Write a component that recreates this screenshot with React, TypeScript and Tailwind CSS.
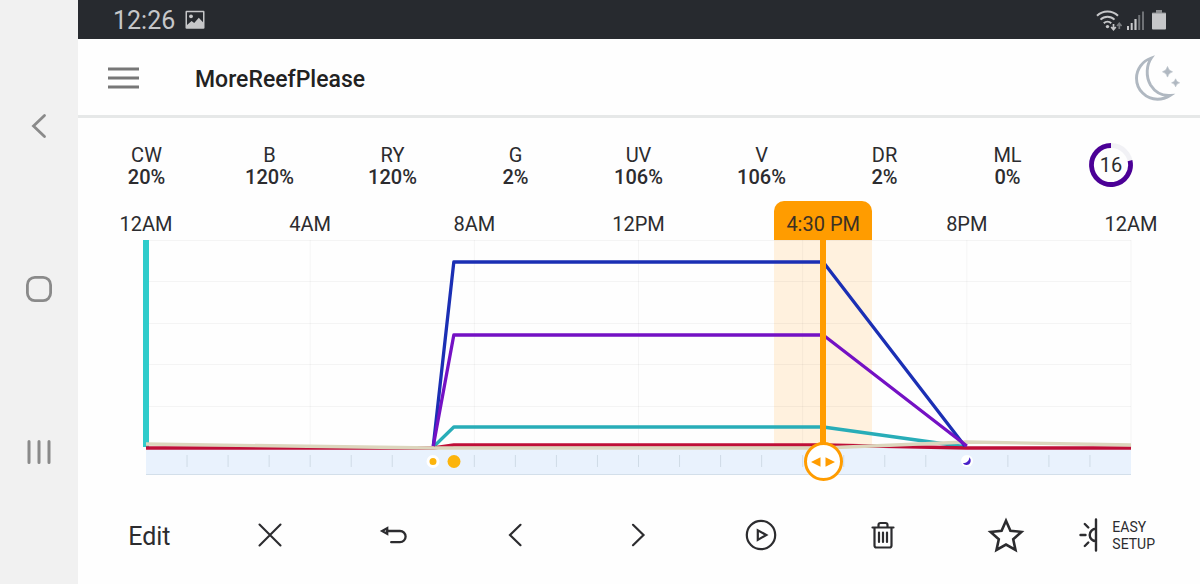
import { useState } from 'react'

interface Channel {
  name: string
  value: string
}

const channels: Channel[] = [
  { name: 'CW', value: '20%' },
  { name: 'B', value: '120%' },
  { name: 'RY', value: '120%' },
  { name: 'G', value: '2%' },
  { name: 'UV', value: '106%' },
  { name: 'V', value: '106%' },
  { name: 'DR', value: '2%' },
  { name: 'ML', value: '0%' },
]

const axisHours = [0, 4, 8, 12, 16, 20, 24]

// one unit of x is a minute, one unit of y is a pixel
const PLOT_HEIGHT = 208

const series = [
  { color: '#28adb8', points: '420,207 450,187 990,187 1200,207' },
  { color: '#bf0f38', points: '0,208 420,208 450,205 990,205 1200,208 1440,208' },
  { color: '#dcd6bd', points: '0,204 420,208 990,208 1200,202 1440,205' },
  { color: '#1b2fb4', points: '420,206 450,22 990,22 1197,206' },
  { color: '#7411c4', points: '420,206 450,95 990,95 1200,206' },
]

function hourLabel(hour: number) {
  return `${hour % 12 || 12}${hour % 24 < 12 ? 'AM' : 'PM'}`
}

function timeLabel(minutes: number) {
  const h = Math.floor(minutes / 60)
  const m = String(minutes % 60).padStart(2, '0')
  return `${h % 12 || 12}:${m} ${h % 24 < 12 ? 'AM' : 'PM'}`
}

function percent(minutes: number) {
  return `${(minutes / 1440) * 100}%`
}

function SystemNav() {
  return (
    <nav
      aria-label="System"
      className="flex w-[78px] shrink-0 flex-col items-center justify-between bg-[#f1f1f1] pt-28 pr-px pb-[118px] text-[#8a8a8a]"
    >
      <button type="button" aria-label="Back">
        <svg width="28" height="28" viewBox="0 0 28 28" fill="none" stroke="currentColor" strokeWidth="2.8" strokeLinecap="round">
          <path d="M19.5 3.5 8.5 14l11 10.5" />
        </svg>
      </button>
      <button type="button" aria-label="Home">
        <svg width="28" height="28" viewBox="0 0 28 28" fill="none" stroke="currentColor" strokeWidth="2.8">
          <rect x="2.4" y="2.4" width="23.2" height="23.2" rx="7.5" />
        </svg>
      </button>
      <button type="button" aria-label="Recent apps">
        <svg width="28" height="28" viewBox="0 0 28 28" fill="none" stroke="currentColor" strokeWidth="3" strokeLinecap="round">
          <path d="M4 3.5v21M14 3.5v21M24 3.5v21" />
        </svg>
      </button>
    </nav>
  )
}

function StatusBar() {
  return (
    <div className="flex h-[39px] items-center justify-between bg-[#272a2f] pr-[34px] pl-[35px] text-[#c6c7c9]">
      <div className="flex items-center gap-2.5">
        <span className="pt-0.5 text-[25px] leading-8">12:26</span>
        <svg width="20" height="20" viewBox="0 0 20 20" fill="currentColor">
          <path
            fillRule="evenodd"
            d="M1.5.8h17a1 1 0 0 1 1 1v16a1 1 0 0 1-1 1h-17a1 1 0 0 1-1-1v-16a1 1 0 0 1 1-1ZM2 2.3v12.8l4.6-4.2 2.6 2.1 4.6-5.2 4.2 4.4V2.3Z"
          />
          <circle cx="6" cy="6.3" r="1.9" />
        </svg>
      </div>
      <div className="flex items-center gap-1">
        <svg width="26" height="22" viewBox="0 0 26 22" fill="none" stroke="currentColor" strokeWidth="2">
          <path d="M1 6.8a15 15 0 0 1 21 0M4.5 10.6a10 10 0 0 1 14 0M7.8 14.2a5.4 5.4 0 0 1 7.4 0" />
          <circle cx="11.5" cy="17.6" r="1.7" fill="currentColor" stroke="none" />
          <path d="M17.5 15v5.5M15.2 18l2.3 2.6 2.3-2.6" strokeWidth="1.7" />
          <path d="M23.3 20v-5M21 17l2.3-2.6 2.3 2.6" strokeWidth="1.7" stroke="#777a7e" />
        </svg>
        <svg width="18" height="20" viewBox="0 0 18 20" fill="currentColor">
          <path d="M1 16h2v4H1zM4.7 13h2v7h-2zM8.4 9h2.2v11H8.4z" />
          <path d="M12.2 5h2v15h-2zM16 1.5h2V20h-2z" fill="#6f7276" />
        </svg>
        <svg className="ml-1" width="14" height="20" viewBox="0 0 14 20">
          <path d="M4 0h6v2.5h3.2a.8.8 0 0 1 .8.8V4H0v-.7a.8.8 0 0 1 .8-.8H4z" fill="#8d8f92" />
          <path d="M0 3.6h14v15a.9.9 0 0 1-.9.9H.9a.9.9 0 0 1-.9-.9z" fill="currentColor" />
        </svg>
      </div>
    </div>
  )
}

function Header() {
  return (
    <header className="flex h-[79px] items-center border-b-3 border-[#e6e8e8] pt-0.5 pr-5 pl-[30px]">
      <button type="button" aria-label="Menu">
        <svg width="31" height="22" viewBox="0 0 31 22" stroke="#777" strokeWidth="3">
          <path d="M0 2h31M0 11h31M0 20h31" />
        </svg>
      </button>
      <h1 className="ml-14 pt-1 text-[23px] leading-8 font-medium text-[#222]">MoreReefPlease</h1>
      <button type="button" aria-label="Moonlight" className="ml-auto">
        <svg width="46" height="48" viewBox="0 0 46 48" fill="none" stroke="#b0b8c1" strokeWidth="2.9">
          <path d="M17.3 4C8.5 7 2.500 15 2.500 24.200A21 21 0 0 0 23.500 45.200C28.500 45.200 32.500 43.800 36 41.500C28 42 21 38 16.500 31C11.500 22 12.500 11 17.300 4Z" />
          <path
            d="M33.500 12.500q1 4.300 5 5.300-4 1-5 5.300-1-4.300-5-5.300 4-1 5-5.300ZM41.600 24.800q.8 3.400 4 4-3.200.7-4 4-.8-3.300-4-4 3.200-.6 4-4Z"
            fill="#b0b8c1"
            stroke="#b0b8c1"
            strokeWidth="0.6"
          />
        </svg>
      </button>
    </header>
  )
}

function ChannelRow() {
  return (
    <div className="grid grid-cols-9 items-center pr-2 pl-[7px] text-center text-[20px] leading-[22px]">
      {channels.map((c) => (
        <div key={c.name} className="pt-0.5">
          <div>{c.name}</div>
          <div className="font-medium">{c.value}</div>
        </div>
      ))}
      <button type="button" aria-label="16 points" className="relative ml-5 size-11">
        <svg className="absolute inset-0" width="44" height="44" viewBox="0 0 44 44" fill="none" strokeWidth="4.8">
          <circle cx="22" cy="22" r="19.5" stroke="#f1f1f5" />
          <path d="M41 17.6A19.5 19.5 0 1 1 22 2.5" stroke="#4b0096" />
        </svg>
        <span className="relative">16</span>
      </button>
    </div>
  )
}

function Schedule() {
  const [time, setTime] = useState(990)

  return (
    <section aria-label="Schedule" className="relative mt-[13px] mr-[69px] ml-17">
      <div className="flex h-[39px] items-center justify-between pt-1.5 text-[20px] leading-6">
        {axisHours.map((hour) => (
          <div key={hour} className="flex w-0 justify-center whitespace-nowrap">
            {Math.abs(hour * 60 - time) > 60 && hourLabel(hour)}
          </div>
        ))}
      </div>

      <div className="relative z-10">
        <div
          className="absolute top-0 h-52 w-[98px] -translate-x-1/2 bg-[#fff1de]"
          style={{ left: percent(time) }}
        />
        <svg
          className="relative block h-52 w-full overflow-visible"
          viewBox={`0 0 1440 ${PLOT_HEIGHT}`}
          preserveAspectRatio="none"
          fill="none"
        >
          <g stroke="#000" strokeOpacity="0.04">
            {[0.5, 41.5, 83.5, 124.5, 166.5].map((y) => (
              <line key={y} x1="0" x2="1440" y1={y} y2={y} vectorEffect="non-scaling-stroke" />
            ))}
            {axisHours.map((h) => (
              <line key={h} x1={h * 60} x2={h * 60} y1="0" y2={PLOT_HEIGHT} vectorEffect="non-scaling-stroke" />
            ))}
          </g>
          <line x1="0" x2="0" y1="0" y2="207" stroke="#2fcccb" strokeWidth="6" vectorEffect="non-scaling-stroke" />
          {series.map((s) => (
            <polyline
              key={s.color}
              points={s.points}
              stroke={s.color}
              strokeWidth="3.3"
              strokeLinejoin="round"
              vectorEffect="non-scaling-stroke"
            />
          ))}
        </svg>
      </div>

      <div className="relative h-[27px] border-b border-[#d3dfea] bg-[#e9f2fd]">
        <svg className="block h-[26px] w-full" viewBox="0 0 24 26" preserveAspectRatio="none" stroke="#cfdbe6">
          {Array.from({ length: 23 }, (_, i) => (
            <line key={i} x1={i + 1} x2={i + 1} y1="7" y2="19" vectorEffect="non-scaling-stroke" />
          ))}
        </svg>
        <span
          className="absolute top-[7px] size-[13px] -translate-x-1/2 rounded-full border-3 border-white bg-[#fcb40c]"
          style={{ left: percent(420) }}
        />
        <span
          className="absolute top-[7px] size-[13px] -translate-x-1/2 rounded-full bg-[#fcb40c]"
          style={{ left: percent(450) }}
        />
        <span
          className="absolute top-[7px] size-3 -translate-x-1/2 rounded-full bg-white"
          style={{ left: percent(1200) }}
        >
          <svg width="12" height="12" viewBox="0 0 12 12">
            <path d="M8.400 2.200C10.900 5 9.800 9.800 5.600 10C4 10.100 2.600 9.300 2 8C5.200 8.200 8.200 6 8.400 2.200Z" fill="#4820c8" />
          </svg>
        </span>
      </div>

      {/* time marker: tab, stem and drag handle */}
      <div
        className="pointer-events-none absolute top-0 z-20 flex w-[98px] -translate-x-1/2 flex-col items-center"
        style={{ left: percent(time) }}
      >
        <output
          htmlFor="time"
          className="h-[39px] w-full rounded-t-[10px] bg-[#ff9c00] pt-[11px] text-center text-[20px] leading-6 text-[#3b3024]"
        >
          {timeLabel(time)}
        </output>
        <span className="h-51 w-1.5 bg-[#ff9c00]" />
        <span className="-mt-0.5 flex size-[39px] items-center justify-center rounded-full border-[3px] border-[#ff9c00] bg-white">
          <svg width="24" height="10" viewBox="0 0 24 10" fill="#ff9c00">
            <path d="M0 5 9.5.3v9.4zM24 5 14.5.3v9.4z" />
          </svg>
        </span>
      </div>
      <input
        id="time"
        type="range"
        aria-label="Time of day"
        min={0}
        max={1440}
        step={15}
        value={time}
        onChange={(e) => setTime(Number(e.target.value))}
        className="absolute inset-x-0 bottom-0 z-30 h-7 w-full cursor-pointer opacity-0"
      />
    </section>
  )
}

function Toolbar() {
  return (
    <div
      role="toolbar"
      aria-label="Schedule actions"
      className="mt-9 mb-6 grid h-12 grid-cols-9 items-stretch pr-2.5 pl-2 [&>button]:flex [&>button]:items-center [&>button]:justify-center"
    >
      <button type="button" className="pt-1 pl-1 text-[25px] leading-8">
        Edit
      </button>
      <button type="button" aria-label="Clear">
        <svg width="26" height="26" viewBox="0 0 26 26" fill="none" stroke="currentColor" strokeWidth="2.1" strokeLinecap="round">
          <path d="M2.500 2.500l21 21M23.500 2.500l-21 21" />
        </svg>
      </button>
      <button type="button" aria-label="Undo">
        <svg width="28" height="20" viewBox="0 0 28 20" fill="none" stroke="currentColor" strokeWidth="2.3" strokeLinecap="round">
          <path d="M8.200 3.200v5.600L3.200 6ZM9.500 6H21a5.500 5.500 0 0 1 0 11.200H12.200" />
        </svg>
      </button>
      <button type="button" aria-label="Previous point">
        <svg width="26" height="26" viewBox="0 0 26 26" fill="none" stroke="currentColor" strokeWidth="2.2" strokeLinecap="round">
          <path d="M18.500 2.800 8 13l10.500 10.200" />
        </svg>
      </button>
      <button type="button" aria-label="Next point">
        <svg width="26" height="26" viewBox="0 0 26 26" fill="none" stroke="currentColor" strokeWidth="2.2" strokeLinecap="round">
          <path d="M8 2.800 18.500 13 8 23.200" />
        </svg>
      </button>
      <button type="button" aria-label="Preview">
        <svg width="32" height="32" viewBox="0 0 32 32" fill="none" stroke="currentColor" strokeWidth="2.2">
          <circle cx="16" cy="16" r="14.200" />
          <path d="M12.800 11.300v9.600L21.300 16Z" />
        </svg>
      </button>
      <button type="button" aria-label="Delete">
        <svg width="24" height="28" viewBox="0 0 24 28" fill="none" stroke="currentColor" strokeWidth="2.2" strokeLinecap="round">
          <path d="M1.500 6.500h21M3.500 6.500v18a2 2 0 0 0 2 2h13a2 2 0 0 0 2-2v-18M7.500 6.200V4a2 2 0 0 1 2-2h5a2 2 0 0 1 2 2v2.200M8 11.500v9.500M12 11.500v9.500M16 11.500v9.500" />
        </svg>
      </button>
      <button type="button" aria-label="Favorite">
        <svg width="38" height="36" viewBox="0 0 38 36" fill="none" stroke="currentColor" strokeWidth="2.6">
          <path d="M19 3.800l4.400 9.900 11 1.200-8.200 7.400 2.300 10.700-9.500-5.400-9.500 5.400 2.300-10.700-8.200-7.400 11-1.200Z" />
        </svg>
      </button>
      <button type="button" className="ml-3 gap-3.5 justify-self-start text-left">
        <svg width="19" height="34" viewBox="0 0 19 34" fill="none" stroke="currentColor" strokeWidth="2.4" strokeLinecap="round">
          <path d="M17 1.500v31M17 10.700a6.300 6.300 0 0 0 0 12.600M1.500 17h5M5.800 6l3.500 3.500M5.800 28l3.500-3.500" />
        </svg>
        <span className="w-11 pt-0.5 text-[14px] leading-[17px]">EASY SETUP</span>
      </button>
    </div>
  )
}

export default function App() {
  return (
    <div className="flex min-h-screen bg-[#fefefe] font-[Roboto,sans-serif] text-[#2c2c2f]">
      <SystemNav />
      <main className="min-w-0 flex-1">
        <StatusBar />
        <Header />
        <div className="pt-6">
          <ChannelRow />
          <Schedule />
          <Toolbar />
        </div>
      </main>
    </div>
  )
}
